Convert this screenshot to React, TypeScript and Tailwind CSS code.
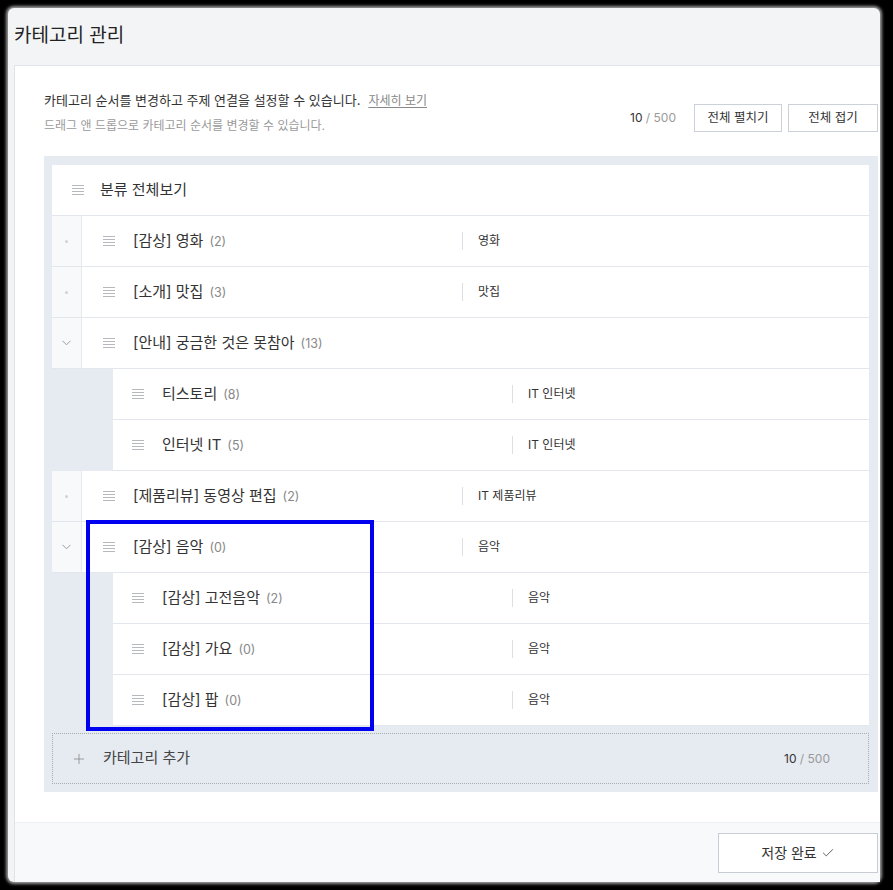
import { Check, Plus } from "lucide-react";

type Child = { name: string; count: number; topic: string };
type Cat = { name: string; count: number; topic: string; children?: Child[] };

const cats: Cat[] = [
  { name: "[감상] 영화", count: 2, topic: "영화" },
  { name: "[소개] 맛집", count: 3, topic: "맛집" },
  {
    name: "[안내] 궁금한 것은 못참아",
    count: 13,
    topic: "",
    children: [
      { name: "티스토리", count: 8, topic: "IT 인터넷" },
      { name: "인터넷 IT", count: 5, topic: "IT 인터넷" },
    ],
  },
  { name: "[제품리뷰] 동영상 편집", count: 2, topic: "IT 제품리뷰" },
  {
    name: "[감상] 음악",
    count: 0,
    topic: "음악",
    children: [
      { name: "[감상] 고전음악", count: 2, topic: "음악" },
      { name: "[감상] 가요", count: 0, topic: "음악" },
      { name: "[감상] 팝", count: 0, topic: "음악" },
    ],
  },
];

function Handle() {
  return (
    <svg width="12" height="10" viewBox="0 0 12 10" className="shrink-0">
      {[0.5, 3.5, 6.5, 9.5].map((y) => (
        <line key={y} x1="0" x2="12" y1={y} y2={y} stroke="#b5b8bd" strokeWidth="1" />
      ))}
    </svg>
  );
}

function Name({ name, count }: { name: string; count: number }) {
  return (
    <span className="flex items-baseline gap-[6px]">
      <span className="text-[15px] text-[#333]">{name}</span>
      <span className="text-[12.5px] text-[#888]">({count})</span>
    </span>
  );
}

function Topic({ topic }: { topic: string }) {
  if (!topic) return null;
  return (
    <div className="flex items-center">
      <span className="h-[18px] w-px bg-[#dcdfe4]" />
      <span className="pl-[15px] text-[12px] text-[#333]">{topic}</span>
    </div>
  );
}

function TopRow({ cat }: { cat: Cat }) {
  return (
    <div className="flex h-[51px] border-b border-[#e3e6ec] bg-white">
      <div className="flex w-[30px] shrink-0 items-center justify-center border-r border-[#e6e9ee] bg-[#f8f9fb]">
        {cat.children ? (
          <svg width="9" height="6" viewBox="0 0 9 6">
            <path d="M0.5 0.8 L4.5 4.8 L8.5 0.8" fill="none" stroke="#9a9ea5" strokeWidth="1" />
          </svg>
        ) : (
          <span className="h-[3px] w-[3px] rounded-full bg-[#cfd2d7]" />
        )}
      </div>
      <div className="flex w-[380px] shrink-0 items-center gap-[18px] pl-[21px]">
        <Handle />
        <Name name={cat.name} count={cat.count} />
      </div>
      <Topic topic={cat.topic} />
    </div>
  );
}

function ChildRow({ item }: { item: Child }) {
  return (
    <div className="flex h-[51px] border-b border-[#e3e6ec] bg-white">
      <div className="flex w-[399px] shrink-0 items-center gap-[18px] pl-[19px]">
        <Handle />
        <Name name={item.name} count={item.count} />
      </div>
      <Topic topic={item.topic} />
    </div>
  );
}

export default function App() {
  return (
    <div className="relative h-[890px] w-[893px] overflow-hidden bg-black font-['Inter','Noto_Sans_CJK_KR',sans-serif]">
      <div className="absolute left-[8px] top-[8px] flex h-[874px] w-[872px] flex-col rounded-[6px] bg-[#f3f4f6] pl-[6px] shadow-[0_0_3px_2px_#9a9a9a]">
        {/* header */}
        <div className="flex h-[57px] shrink-0 items-center">
          <h1 className="text-[19px] text-[#222]">카테고리 관리</h1>
        </div>

        {/* content */}
        <div className="flex flex-1 flex-col border-l border-t border-[#dfe3ea] bg-white">
          <div className="flex h-[90px] shrink-0 items-start justify-between pl-[29px] pr-[2px] pt-[24px]">
            <div className="flex flex-col">
              <div className="flex items-baseline gap-[8px] leading-[20px]">
                <span className="text-[13px] text-[#333]">
                  카테고리 순서를 변경하고 주제 연결을 설정할 수 있습니다.
                </span>
                <span className="text-[12px] text-[#888] underline underline-offset-2">자세히 보기</span>
              </div>
              <div className="mt-[5px] text-[12px] leading-[20px] text-[#9a9a9a]">
                드래그 앤 드롭으로 카테고리 순서를 변경할 수 있습니다.
              </div>
            </div>
            <div className="mt-[14px] flex items-center">
              <span className="mr-[18px] text-[12px] text-[#333]">
                10 <span className="text-[#9a9a9a]">/ 500</span>
              </span>
              <button className="h-[28px] w-[88px] border border-[#ccd0d8] bg-white text-[12.5px] text-[#333]">
                전체 펼치기
              </button>
              <button className="ml-[6px] h-[28px] w-[90px] border border-[#ccd0d8] bg-white text-[12.5px] text-[#333]">
                전체 접기
              </button>
            </div>
          </div>

          {/* tree */}
          <div className="ml-[29px] mr-[2px] flex h-[636px] shrink-0 flex-col bg-[#e6eaf1] pb-[8px] pl-[8px] pr-[9px] pt-[9px]">
            <div className="flex flex-col">
              <div className="flex h-[51px] items-center gap-[16px] border-b border-[#e3e6ec] bg-white pl-[20px]">
                <Handle />
                <span className="text-[15px] text-[#333]">분류 전체보기</span>
              </div>
              {cats.map((c) => (
                <div key={c.name} className="flex flex-col">
                  <TopRow cat={c} />
                  {c.children && (
                    <div className="flex flex-col pl-[61px]">
                      {c.children.map((ch) => (
                        <ChildRow key={ch.name} item={ch} />
                      ))}
                    </div>
                  )}
                </div>
              ))}
            </div>
            <div className="mt-[7px] flex h-[51px] items-center justify-between border border-dotted border-[#a9adb3] pl-[18px] pr-[38px]">
              <div className="flex items-center gap-[16px]">
                <Plus className="h-[16px] w-[16px] text-[#888]" strokeWidth={1.2} />
                <span className="text-[15px] text-[#444]">카테고리 추가</span>
              </div>
              <span className="text-[12px] text-[#333]">
                10 <span className="text-[#9a9a9a]">/ 500</span>
              </span>
            </div>
          </div>

          {/* footer */}
          <div className="mt-auto flex h-[60px] shrink-0 items-center justify-end border-t border-[#eef0f3] bg-[#f8f9fb] pr-[2px]">
            <button className="flex h-[40px] w-[160px] items-center justify-center gap-[4px] border border-[#c8ccd4] bg-white text-[14px] text-[#333]">
              저장 완료
              <Check className="h-[14px] w-[14px]" strokeWidth={1.3} />
            </button>
          </div>
        </div>
      </div>

      {/* highlight annotation */}
      <div className="pointer-events-none absolute left-[86px] top-[520px] h-[211px] w-[288px] border-[4px] border-[#0000f0]" />
    </div>
  );
}
